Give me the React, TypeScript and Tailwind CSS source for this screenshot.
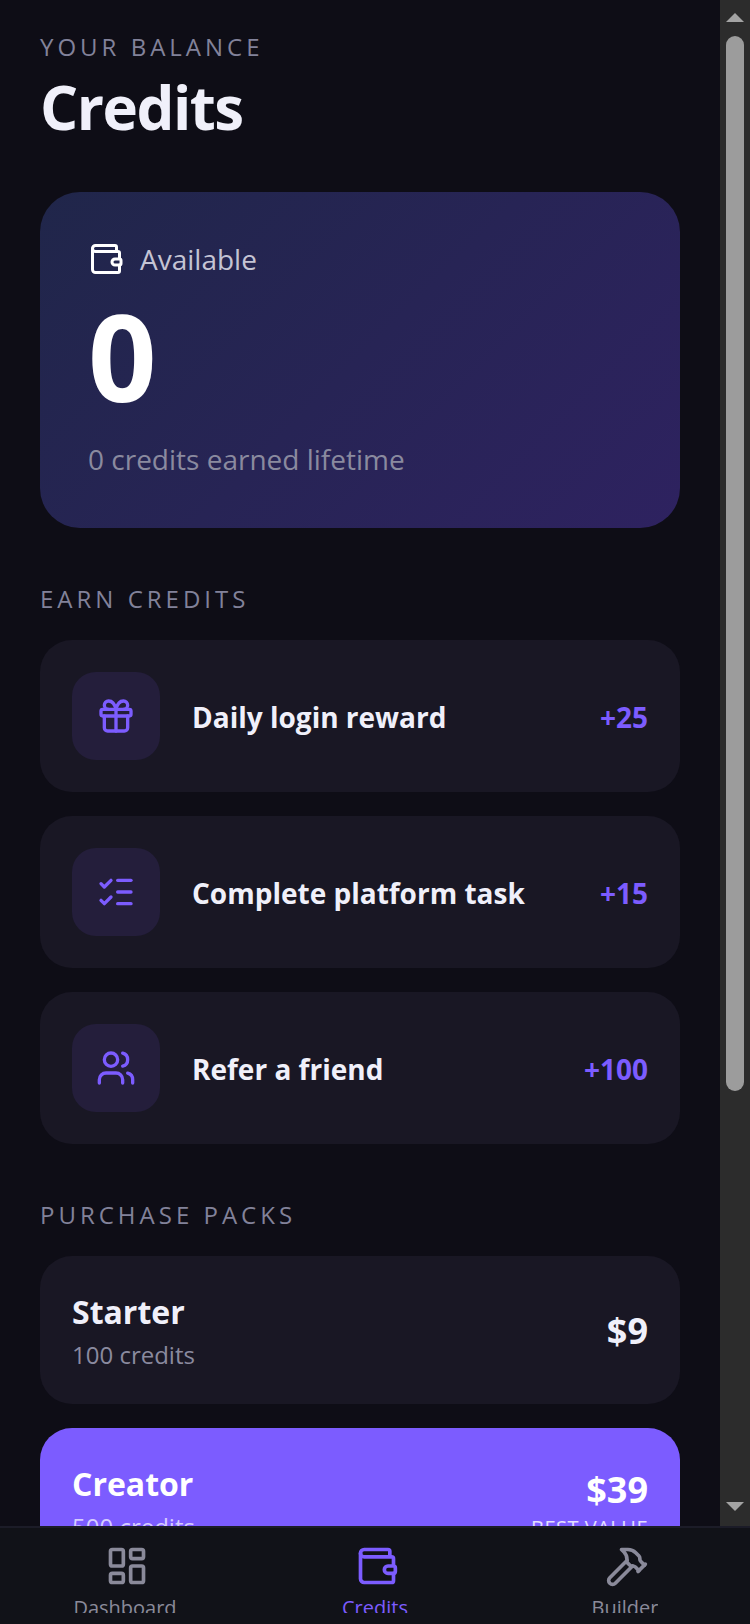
import React from 'react';
import { Gift, Hammer, LayoutDashboard, ListChecks, Users, Wallet } from 'lucide-react';

const font = { fontFamily: '"Open Sans", sans-serif' };

const tasks = [
    { id: 1, label: 'Daily login reward', credits: '+25', Icon: Gift },
    { id: 2, label: 'Complete platform task', credits: '+15', Icon: ListChecks },
    { id: 3, label: 'Refer a friend', credits: '+100', Icon: Users },
];

const navItems = [
    { id: 1, label: 'Dashboard', Icon: LayoutDashboard, active: false },
    { id: 2, label: 'Credits', Icon: Wallet, active: true },
    { id: 3, label: 'Builder', Icon: Hammer, active: false },
];

const SectionTitle = ({ children }: { children: React.ReactNode }) => (
    <h2 className="text-[24px] leading-[30px] tracking-[4px] text-[#82829a] uppercase">{children}</h2>
);

const Scrollbar = () => (
    <div className="w-[30px] shrink-0 h-[1526px] bg-[#2c2c2c] flex flex-col items-center pt-[13px]">
        <svg width="18" height="9" viewBox="0 0 18 9" className="shrink-0">
            <polygon points="9,0 18,9 0,9" fill="#a3a3a3" />
        </svg>
        <div className="w-[18px] h-[1055px] mt-[14px] rounded-full bg-[#9c9c9c] shrink-0" />
        <svg width="18" height="9" viewBox="0 0 18 9" className="shrink-0 mt-[411px]">
            <polygon points="0,0 18,0 9,9" fill="#a3a3a3" />
        </svg>
    </div>
);

export default function App() {
    return (
        <div style={font} className="relative flex w-[750px] h-[1624px] overflow-hidden bg-[#0e0d16]">
            <main className="flex-1 px-10 pt-[32px]">
                <p className="text-[24px] leading-[30px] tracking-[4px] text-[#82829a] uppercase">Your balance</p>
                <h1 className="text-[60px] leading-[80px] font-bold text-[#f0f0fa] tracking-[-1.5px] mt-[5px]">Credits</h1>

                <section className="mt-[45px] h-[336px] rounded-[40px] bg-[linear-gradient(135deg,#20264a,#2e2260)] pl-12 pr-8 pt-[48px]">
                    <div className="flex items-center gap-4 h-[38px]">
                        <Wallet size={36} className="text-white" />
                        <span className="text-[28px] text-[#c4c4d4]">Available</span>
                    </div>
                    <p className="text-[120px] leading-[140px] font-bold text-white mt-[8px]">0</p>
                    <p className="text-[28px] leading-[38px] text-[#8a8a9f] mt-[14px]">0 credits earned lifetime</p>
                </section>

                <div className="mt-[56px]">
                    <SectionTitle>Earn credits</SectionTitle>
                </div>
                <div className="mt-[26px] flex flex-col gap-6">
                    {tasks.map(({ id, label, credits, Icon }) => (
                        <div key={id} className="flex items-center h-[152px] rounded-[32px] bg-[#191724] px-8">
                            <div className="flex items-center justify-center w-[88px] h-[88px] rounded-[24px] bg-[#241e3b]">
                                <Icon size={40} className="text-[#7c5cff]" />
                            </div>
                            <span className="ml-8 pt-[2px] flex-1 text-[28px] font-bold text-[#f0f0fa]">{label}</span>
                            <span className="pt-[2px] text-[28px] font-bold text-[#7c5cff]">{credits}</span>
                        </div>
                    ))}
                </div>

                <div className="mt-[56px]">
                    <SectionTitle>Purchase packs</SectionTitle>
                </div>
                <div className="mt-[26px] flex flex-col gap-6">
                    <div className="flex items-center justify-between h-[148px] rounded-[32px] bg-[#191724] px-8">
                        <div>
                            <p className="text-[32px] leading-[44px] font-bold text-[#f0f0fa]">Starter</p>
                            <p className="text-[24px] leading-[32px] mt-[5px] text-[#8a8a9f]">100 credits</p>
                        </div>
                        <p className="pt-[2px] text-[36px] font-bold text-[#f0f0fa]">$9</p>
                    </div>
                    <div className="flex items-center justify-between h-[148px] rounded-[32px] bg-[#7c5cff] px-8">
                        <div>
                            <p className="text-[32px] leading-[44px] font-bold text-white">Creator</p>
                            <p className="text-[24px] leading-[32px] mt-[5px] text-white/70">500 credits</p>
                        </div>
                        <div className="pt-[4px] text-right">
                            <p className="text-[36px] leading-[48px] font-bold text-white">$39</p>
                            <p className="text-[20px] leading-[28px] tracking-[0.5px] text-white/80">BEST VALUE</p>
                        </div>
                    </div>
                </div>
            </main>

            <Scrollbar />

            <nav className="absolute bottom-0 inset-x-0 h-[98px] grid grid-cols-3 bg-[#111218] border-t-2 border-[#1c1c28]">
                {navItems.map(({ id, label, Icon, active }) => (
                    <div key={id} className={`flex flex-col items-center pt-[16px] ${active ? 'text-[#7c5cff]' : 'text-[#8a8a9a]'}`}>
                        <Icon size={44} className="ml-[3px]" />
                        <span className="h-[19px] overflow-hidden text-[20px] leading-[28px] mt-[6px]">{label}</span>
                    </div>
                ))}
            </nav>
        </div>
    );
}
